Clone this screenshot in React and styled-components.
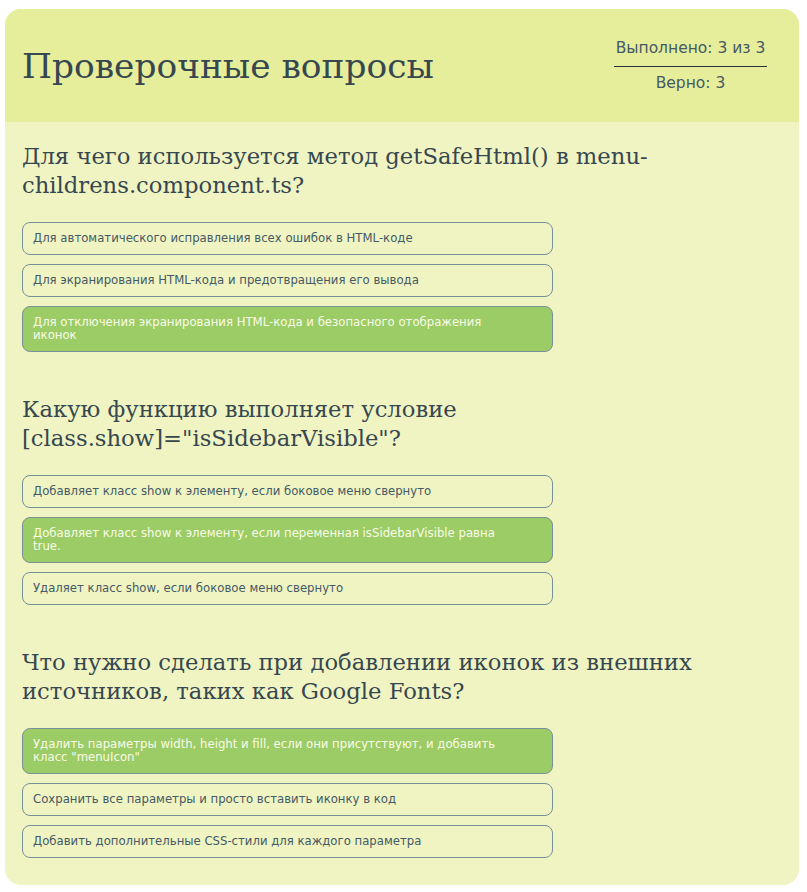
import React from 'react';
import styled, { createGlobalStyle } from 'styled-components';

const GlobalStyle = createGlobalStyle`
    body {
        margin: 0;
        background: #ffffff;
    }
`

const Page = styled.div`
    padding: 9px 8px 8px 5px;
`

const Card = styled.div`
    background-color: #F0F4C3;
    border-radius: 16px;
    overflow: hidden;
    color: #37474F;
`

const Header = styled.div`
    height: 113px;
    background-color: #E6EE9C;
    display: flex;
    justify-content: space-between;
    align-items: center;
    padding: 0 32px 0 17px;
`

const Title = styled.h1`
    margin: 0;
    font-family: "DejaVu Serif", serif;
    font-weight: 400;
    font-size: 34.4px;
    color: #37474F;
`

const Stats = styled.div`
    display: flex;
    flex-direction: column;
    align-items: center;
    width: 153px;
    font-family: "DejaVu Sans", sans-serif;
    font-size: 15.5px;
    line-height: 18px;
    color: #455A64;

    .done{
        width: 100%;
        text-align: center;
        padding-bottom: 9px;
        border-bottom: 1px solid #263238;
        white-space: nowrap;
    }

    .right{
        padding-top: 7px;
    }
`

const Body = styled.div`
    padding: 20px 17px 27px;
    display: flex;
    flex-direction: column;
    gap: 43px;
`

const Question = styled.div`
    display: flex;
    flex-direction: column;
    gap: 22px;
`

const QuestionTitle = styled.h2`
    margin: 0;
    max-width: 740px;
    font-family: "DejaVu Serif", serif;
    font-weight: 400;
    font-size: 22.7px;
    line-height: 29px;
    color: #37474F;
`

const Answers = styled.div`
    display: flex;
    flex-direction: column;
    gap: 9px;
`

const Answer = styled.div`
    width: 531px;
    box-sizing: border-box;
    padding: 9px 30px 9px 10px;
    border: 1px solid #78909C;
    border-radius: 8px;
    font-family: "DejaVu Sans", sans-serif;
    font-size: 11.7px;
    line-height: 13px;
    background-color: ${props => props.$correct ? '#9CCC65' : 'transparent'};
    color: ${props => props.$correct ? '#F9FBE7' : '#455A64'};
`

const questions = [
    {
        title: 'Для чего используется метод getSafeHtml() в menu-childrens.component.ts?',
        answers: [
            'Для автоматического исправления всех ошибок в HTML-коде',
            'Для экранирования HTML-кода и предотвращения его вывода',
            'Для отключения экранирования HTML-кода и безопасного отображения иконок'
        ],
        correct: 2
    },
    {
        title: 'Какую функцию выполняет условие [class.show]="isSidebarVisible"?',
        answers: [
            'Добавляет класс show к элементу, если боковое меню свернуто',
            'Добавляет класс show к элементу, если переменная isSidebarVisible равна true.',
            'Удаляет класс show, если боковое меню свернуто'
        ],
        correct: 1
    },
    {
        title: 'Что нужно сделать при добавлении иконок из внешних источников, таких как Google Fonts?',
        answers: [
            'Удалить параметры width, height и fill, если они присутствуют, и добавить класс "menuIcon"',
            'Сохранить все параметры и просто вставить иконку в код',
            'Добавить дополнительные CSS-стили для каждого параметра'
        ],
        correct: 0
    }
];

export default function App() {
    return (
        <Page>
            <GlobalStyle />
            <Card>
                <Header>
                    <Title>Проверочные вопросы</Title>
                    <Stats>
                        <div className="done">Выполнено: 3 из 3</div>
                        <div className="right">Верно: 3</div>
                    </Stats>
                </Header>
                <Body>
                    {questions.map((q, i) => (
                        <Question key={i}>
                            <QuestionTitle>{q.title}</QuestionTitle>
                            <Answers>
                                {q.answers.map((a, j) => (
                                    <Answer key={j} $correct={j === q.correct}>{a}</Answer>
                                ))}
                            </Answers>
                        </Question>
                    ))}
                </Body>
            </Card>
        </Page>
    );
}
